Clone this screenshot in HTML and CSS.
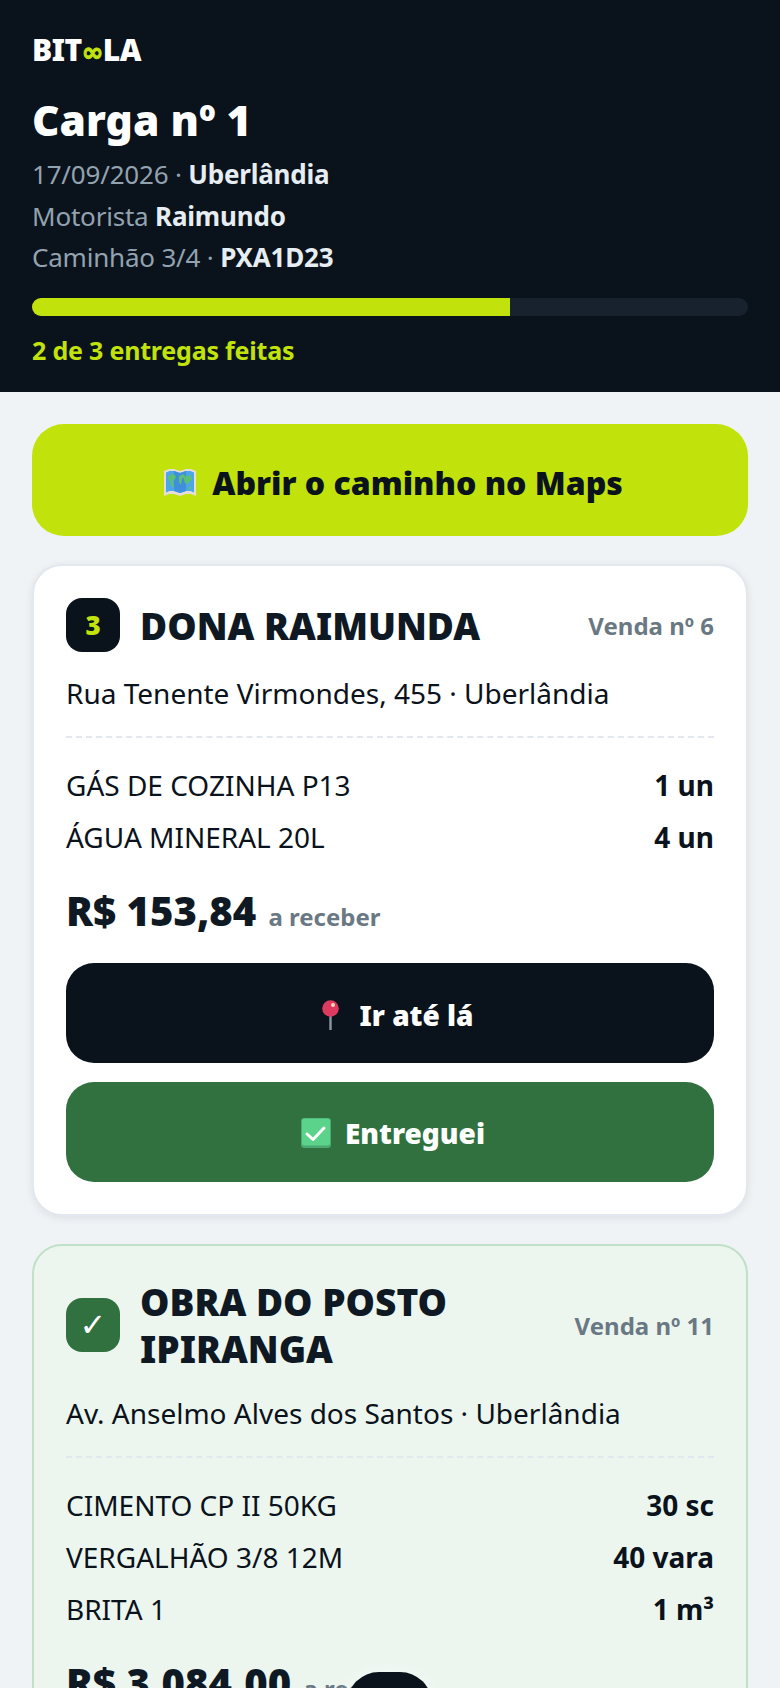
FILE: index.html
```html
<!DOCTYPE html>
<html lang="pt-BR">
<head>
  <meta charset="utf-8" />
  <meta name="viewport" content="width=device-width, initial-scale=1" />
  <title>Carga nº 1</title>
  <link rel="stylesheet" href="styles.css">
</head>
<body>
  <header class="top">
    <div class="logo">BIT<span class="logo-inf">∞</span>LA</div>
    <h1 class="load-title">Carga nº 1</h1>
    <div class="meta">17/09/2026 · <b>Uberlândia</b></div>
    <div class="meta">Motorista <b>Raimundo</b></div>
    <div class="meta">Caminhão 3/4 · <b>PXA1D23</b></div>
    <div class="progress"><div class="progress-fill" style="width: 66.7%"></div></div>
    <div class="progress-label">2 de 3 entregas feitas</div>
  </header>

  <main class="content">
    <a class="btn btn-maps" href="#">
      <svg class="emoji emoji-map" viewBox="0 0 32 29" aria-hidden="true">
        <path d="M0 3l5-2 5 0 6 2 6-2 5 0 5 2v25l-5-2-5 0-6 2-6-2-5 0-5 2z" fill="#e6dcd8"/>
        <path d="M2 4.500l3.500-1.500 4.500 0 6 2 6-2 4.500 0 3.500 1.500v20l-3.500-1.500-4.500 0-6 2-6-2-4.500 0-3.500 1.500z" fill="#4da6ea"/>
        <path d="M10 3l6 2v20l-6-2zM22 3v20l-6 2v-20z" fill="#3f8fdc"/>
        <path d="M4 8l5-2 3 2-1 3-2 2 1 4-1 3-2-3-1-4-2-2zM15 8l5-2 1 3-3 2-1 6-2-3zM20 9l7-2 1 5-3 2-1 3-3-2-1-3z" fill="#5cbf73"/>
        <path d="M25 19l2-1v3l-2 1z" fill="#5cbf73"/>
      </svg>
      <span>Abrir o caminho no Maps</span>
    </a>

    <section class="stop">
      <div class="stop-head">
        <div class="badge">3</div>
        <h2 class="stop-name">DONA RAIMUNDA</h2>
        <div class="sale">Venda nº 6</div>
      </div>
      <div class="address">Rua Tenente Virmondes, 455 · Uberlândia</div>
      <ul class="items">
        <li><span>GÁS DE COZINHA P13</span><b>1 un</b></li>
        <li><span>ÁGUA MINERAL 20L</span><b>4 un</b></li>
      </ul>
      <div class="total"><b>R$ 153,84</b> <span>a receber</span></div>
      <a class="btn btn-go" href="#">
        <svg class="emoji emoji-pin" viewBox="0 0 17 30" aria-hidden="true">
          <rect x="7.300" y="14" width="2.400" height="16" fill="#8c96a3"/>
          <circle cx="8.500" cy="8.500" r="8.300" fill="#dd3a60"/>
          <circle cx="11" cy="5" r="2" fill="#f4d9b8"/>
        </svg>
        <span>Ir até lá</span>
      </a>
      <a class="btn btn-done" href="#">
        <svg class="emoji emoji-check" viewBox="0 0 30 30" aria-hidden="true">
          <rect x="0" y="0" width="30" height="30" rx="3" fill="#4aa873"/>
          <rect x="1" y="0.500" width="28" height="27" rx="2.500" fill="#5bd38b"/>
          <path d="M6 16l6 5.500 11-11.500" fill="none" stroke="#fff" stroke-width="3" stroke-linecap="round" stroke-linejoin="round"/>
        </svg>
        <span>Entreguei</span>
      </a>
    </section>

    <section class="stop stop-done">
      <div class="stop-head">
        <div class="badge badge-done">✓</div>
        <h2 class="stop-name">OBRA DO POSTO IPIRANGA</h2>
        <div class="sale">Venda nº 11</div>
      </div>
      <div class="address">Av. Anselmo Alves dos Santos · Uberlândia</div>
      <ul class="items">
        <li><span>CIMENTO CP II 50KG</span><b>30 sc</b></li>
        <li><span>VERGALHÃO 3/8 12M</span><b>40 vara</b></li>
        <li><span>BRITA 1</span><b>1 m³</b></li>
      </ul>
      <div class="total"><b>R$ 3.084,00</b> <span>a receber</span></div>
    </section>
  </main>

  <div class="float-pill"></div>
</body>
</html>
```

FILE: styles.css
```css
* { box-sizing: border-box; }
html, body { margin: 0; }
body {
  background: #eff3f6;
  color: #0a121b;
  font-family: "Noto Sans", sans-serif;
  font-size: 28px;
  height: 1688px;
  overflow: hidden;
  position: relative;
}
a { text-decoration: none; color: inherit; }

.top {
  background: #0a121b;
  color: #fff;
  height: 392px;
  padding: 32px 32px 0;
}
.logo { height: 36px; font-size: 30px; line-height: 36px; font-weight: 900; letter-spacing: -0.5px; }
.logo-inf { color: #c1e20b; font-family: "DejaVu Sans", sans-serif; font-size: 26px; line-height: 1; -webkit-text-stroke: 1px #c1e20b; }
.load-title { margin: 24px 0 6px; font-size: 42.5px; line-height: 56px; font-weight: 900; }
.meta { font-size: 26px; line-height: 41.6px; letter-spacing: -0.2px; color: #93a2b0; }
.meta b { color: #e6edf3; font-weight: 700; }
.progress { margin-top: 19px; height: 18px; background: #17222e; border-radius: 9px; overflow: hidden; }
.progress-fill { height: 100%; background: #c1e20b; }
.progress-label { margin-top: 17px; font-size: 25px; line-height: 34px; letter-spacing: -0.2px; font-weight: 700; color: #c1e20b; }

.content { padding: 32px 32px 0; display: flex; flex-direction: column; gap: 28px; }

.btn {
  display: flex; align-items: center; justify-content: center; gap: 14px;
  border-radius: 28px;
  font-weight: 900;
}
.btn-maps { height: 112px; padding-top: 5px; gap: 16px; background: #c1e20b; color: #0a121b; font-size: 32px; border-radius: 32px; }
.btn-go { height: 100px; padding-top: 3px; gap: 20px; background: #0a121b; color: #fff; margin-top: 18px; }
.btn-done { height: 100px; padding-top: 2px; background: #30713f; color: #fff; margin-top: 19px; }
.emoji { display: block; flex: none; }
.emoji-map { width: 32px; height: 29px; margin-left: 7px; }
.emoji-pin { width: 17px; height: 30px; margin-left: 16px; }
.emoji-check { width: 30px; height: 30px; margin-left: 6px; }

.stop {
  background: #fff;
  border: 2px solid #e2e8ee;
  border-radius: 30px;
  padding: 32px;
  box-shadow: 0 2px 8px rgba(10, 18, 27, 0.08);
}
.stop-done { background: #ecf6ef; border-color: #c0e0c8; box-shadow: none; }
.stop-head { display: flex; align-items: center; gap: 20px; }
.badge {
  flex: none; width: 54px; height: 54px; border-radius: 16px;
  display: flex; align-items: center; justify-content: center;
  background: #0a121b; color: #c1e20b; font-size: 26px; font-weight: 900;
}
.badge-done { background: #30713f; color: #fff; font-family: "DejaVu Sans", sans-serif; font-size: 32px; }
.stop-name { margin: 0; flex: 1; font-size: 37px; line-height: 47px; font-weight: 900; color: #0f1924; }
.sale { flex: none; font-size: 24px; font-weight: 700; color: #6a7884; }
.address { margin-top: 21px; font-size: 28px; line-height: 40px; }
.items { list-style: none; margin: 23px 0 0; padding: 21px 0 0; border-top: 2px dashed #e2e8ee; }
.items li { display: flex; justify-content: space-between; font-size: 28px; line-height: 52px; }
.items b { font-weight: 700; }
.total { margin-top: 20px; line-height: 56px; }
.total b { font-size: 40px; font-weight: 900; color: #0f1924; }
.total span { margin-left: 5px; font-size: 24px; font-weight: 700; color: #6a7884; }

/* floats over the page, mostly below the fold */
.float-pill {
  position: absolute; left: 347px; top: 1672px;
  width: 85px; height: 85px; border-radius: 32px;
  background: #0a121b;
  box-shadow: 0 0 14px rgba(255, 255, 255, 0.5);
}
```
